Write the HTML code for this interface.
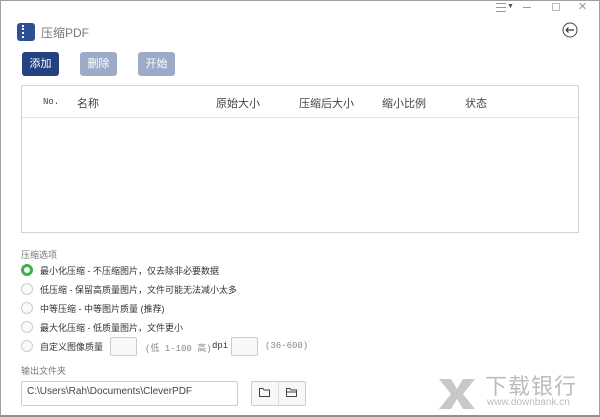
<!DOCTYPE html>
<html><head><meta charset="utf-8"><style>
*{margin:0;padding:0;box-sizing:border-box}
body{width:600px;height:417px;overflow:hidden;background:#fff;font-family:"Liberation Sans","Noto Sans CJK SC",sans-serif;position:relative;color:#333}
.win{position:absolute;left:0;top:0;width:600px;height:417px;border:1px solid #a0a0a0;border-bottom:2px solid #909090}
.a{position:absolute;white-space:nowrap}
.btn{position:absolute;top:52px;width:37px;height:24px;border-radius:3px;color:#fff;font-size:11px;text-align:center;line-height:24px}
.th{position:absolute;top:95px;font-size:11px;color:#444}
.radio{position:absolute;left:21px;width:12px;height:12px;border-radius:50%;border:1px solid #ccc;background:#fafafa}
.opt{position:absolute;left:40px;font-size:9px;color:#333}
.inp{position:absolute;border:1px solid #ccc;border-radius:2px;background:#fff}
</style></head><body>
<div class="win"></div>
<div class="a" style="left:496px;top:3px;width:10px;height:9px;border-top:1px solid #999;border-bottom:1px solid #999"></div>
<div class="a" style="left:496px;top:7px;width:10px;height:1px;background:#999"></div>
<div class="a" style="left:507px;top:3px;font-size:7px;color:#555">▼</div>
<div class="a" style="left:523px;top:7px;width:8px;height:1px;background:#999"></div>
<div class="a" style="left:552px;top:3px;width:8px;height:8px;border:1px solid #bbb"></div>
<div class="a" style="left:578px;top:0px;font-size:11px;color:#999">✕</div>
<svg class="a" style="left:562px;top:22px" width="16" height="16" viewBox="0 0 16 16"><circle cx="8" cy="8" r="7" fill="none" stroke="#444" stroke-width="1"/><path d="M4 8H12M4 8L6.5 5.5M4 8L6.5 10.5" stroke="#333" stroke-width="1.2" fill="none"/></svg>
<div class="a" style="left:17px;top:23px;width:18px;height:18px;background:#2d4f93;border-radius:3px"></div>
<div class="a" style="left:22px;top:25px;width:6px;height:13px;border-left:2px dotted #fff"></div>
<div class="a" style="left:41px;top:24px;font-size:12px;color:#777">压缩PDF</div>
<div class="btn" style="left:22px;background:#24427f">添加</div>
<div class="btn" style="left:80px;background:#9eabc8">删除</div>
<div class="btn" style="left:138px;background:#9eabc8">开始</div>
<div class="a" style="left:21px;top:85px;width:558px;height:148px;border:1px solid #d4d4d4"></div>
<div class="a" style="left:22px;top:117px;width:556px;height:1px;background:#e0e0e0"></div>
<div class="th" style="left:43px;font-family:'Liberation Mono',monospace;font-size:9px;top:97px">No.</div>
<div class="th" style="left:77px">名称</div>
<div class="th" style="left:216px">原始大小</div>
<div class="th" style="left:299px">压缩后大小</div>
<div class="th" style="left:382px">缩小比例</div>
<div class="th" style="left:465px">状态</div>
<div class="a" style="left:21px;top:248px;font-size:9px;color:#777">压缩选项</div>
<div class="radio" style="top:264px;border:3px solid #3eb14b;background:#fff"></div>
<div class="opt" style="top:264px">最小化压缩 - 不压缩图片，仅去除非必要数据</div>
<div class="radio" style="top:283px"></div>
<div class="opt" style="top:283px">低压缩 - 保留高质量图片，文件可能无法减小太多</div>
<div class="radio" style="top:302px"></div>
<div class="opt" style="top:302px">中等压缩 - 中等图片质量 (推荐)</div>
<div class="radio" style="top:321px"></div>
<div class="opt" style="top:321px">最大化压缩 - 低质量图片，文件更小</div>
<div class="radio" style="top:340px"></div>
<div class="opt" style="top:340px">自定义图像质量</div>
<div class="inp" style="left:110px;top:337px;width:27px;height:19px;background:#f8f8f8"></div>
<div class="a" style="left:145px;top:341px;font-size:9px;color:#888;font-family:'Liberation Mono','Noto Sans CJK SC',monospace">(低 1-100 高)</div>
<div class="a" style="left:212px;top:341px;font-size:9px;color:#333;font-family:'Liberation Mono',monospace">dpi</div>
<div class="inp" style="left:231px;top:337px;width:27px;height:19px;background:#f8f8f8"></div>
<div class="a" style="left:265px;top:341px;font-size:9px;color:#888;font-family:'Liberation Mono',monospace">(36-600)</div>
<div class="a" style="left:21px;top:364px;font-size:9px;color:#777">输出文件夹</div>
<div class="inp" style="left:21px;top:381px;width:217px;height:25px"></div>
<div class="a" style="left:27px;top:386px;font-size:10px;color:#444">C:\Users\Rah\Documents\CleverPDF</div>
<div class="inp" style="left:251px;top:381px;width:55px;height:25px;background:#f8f8f8"></div>
<div class="a" style="left:278px;top:381px;width:1px;height:25px;background:#ddd"></div>
<svg class="a" style="left:259px;top:388px" width="11" height="9" viewBox="0 0 11 9"><path d="M0.5 0.5H4L5 2H10.5V8.5H0.5Z" fill="none" stroke="#444"/></svg>
<svg class="a" style="left:286px;top:388px" width="11" height="9" viewBox="0 0 11 9"><path d="M0.5 0.5H4L5 2H10.5V8.5H0.5Z M0.5 4H10.5" fill="none" stroke="#444"/></svg>
<svg class="a" style="left:437px;top:377px" width="40" height="34" viewBox="0 0 40 34"><path d="M2 2H14L20 12L26 2H38L26 17L38 32H26L20 22L14 32H2L14 17Z" fill="#c8c8c8"/></svg>
<div class="a" style="left:485px;top:369px;font-size:22px;color:#bcbcbc;letter-spacing:1px">下载银行</div>
<div class="a" style="left:487px;top:397px;font-size:10px;color:#bcbcbc">www.downbank.cn</div>
</body></html>
